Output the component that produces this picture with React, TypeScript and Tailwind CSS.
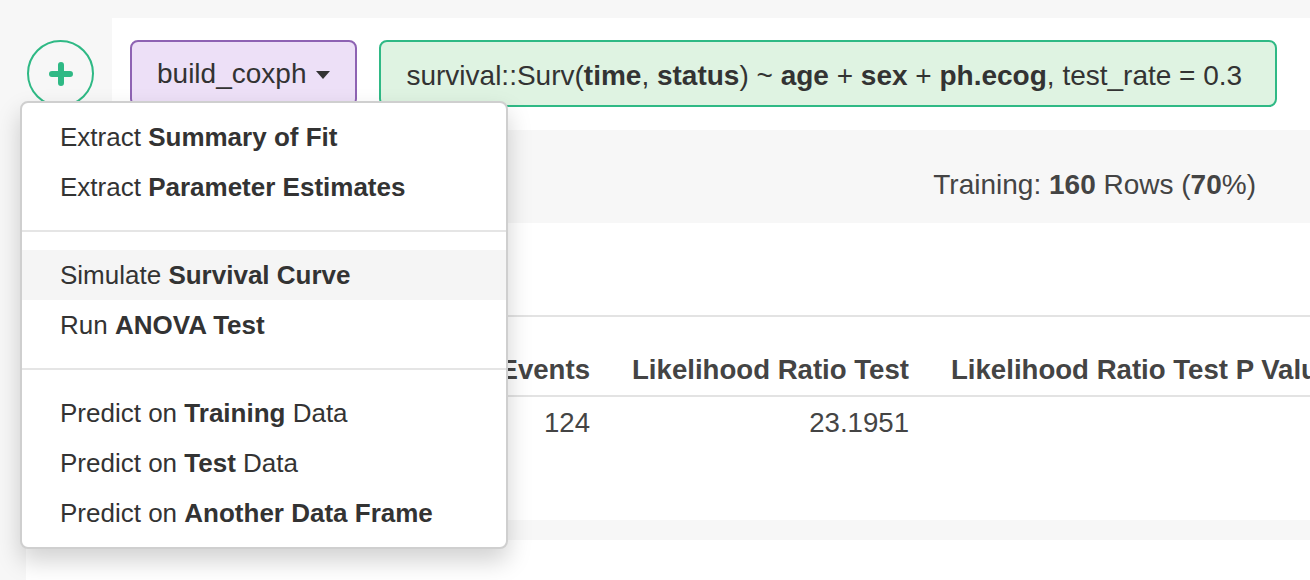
import React from "react";

const font = { fontFamily: '"Liberation Sans", Arial, sans-serif' };

function MenuItem({ pre, bold, post, active }: { pre: string; bold: string; post?: string; active?: boolean }) {
  return (
    <div className={`h-[50px] flex items-center pl-[38px] text-[26px] text-[#333] ${active ? "bg-[#f5f5f5]" : ""}`}>
      <span>
        {pre} <b className="font-bold">{bold}</b>
        {post ? ` ${post}` : ""}
      </span>
    </div>
  );
}

function Sep() {
  return <div className="h-[2px] my-[18px] bg-[#e5e5e5]" />;
}

export default function App() {
  return (
    <div className="relative w-[1310px] h-[580px] overflow-hidden bg-[#f7f7f7]" style={font}>
      {/* header row */}
      <div className="flex pt-[18px] h-[130px]">
        <div className="w-[112px] shrink-0 pl-[27px] pt-[22px]">
          <div className="w-[67px] h-[67px] rounded-full border-2 border-[#2fb985] flex items-center justify-center">
            <svg width="24" height="24" viewBox="0 0 24 24">
              <path d="M12 3v18M3 12h18" stroke="#2fb985" strokeWidth="6" strokeLinecap="round" />
            </svg>
          </div>
        </div>
        <div className="flex-1 bg-white flex items-start pt-[22px] pl-[18px] gap-[22px]">
          <div className="h-[67px] px-[25px] flex items-center gap-[10px] rounded-[8px] border-2 border-[#8e63b3] bg-[#ede0f7] text-[28px] text-[#333]">
            <span>build_coxph</span>
            <svg width="14" height="8" viewBox="0 0 14 8" className="mt-[2px]">
              <path d="M0 0h14L7 8z" fill="#333" />
            </svg>
          </div>
          <div className="h-[67px] w-[898px] px-[25px] pt-[4px] flex items-center rounded-[8px] border-2 border-[#2fb985] bg-[#dff3e2] text-[28px] text-[#333] whitespace-nowrap">
            <span>
              survival::Surv(<b>time</b>, <b>status</b>) ~ <b>age</b> + <b>sex</b> + <b>ph.ecog</b>, test_rate = 0.3
            </span>
          </div>
        </div>
      </div>

      {/* summary band */}
      <div className="h-[93px] flex items-center justify-end pr-[54px] pt-[17px] text-[28px] text-[#444]">
        <span>
          Training: <b>160</b> Rows (<b>70</b>%)
        </span>
      </div>

      {/* table panel */}
      <div className="ml-[26px] bg-white h-[297px] pt-[92px]">
        <div className="border-t-2 border-[#e3e3e3]" />
        <div className="grid grid-cols-[456px_129px_319px_400px] text-[27.6px] text-[#444] whitespace-nowrap">
          <div className="h-[78px]" />
          <div className="h-[78px] flex items-end justify-end pb-[5px] pr-[21px] font-bold">Events</div>
          <div className="h-[78px] flex items-end justify-end pb-[5px] pr-[21px] font-bold">Likelihood Ratio Test</div>
          <div className="h-[78px] flex items-end pb-[5px] pl-[21px] font-bold overflow-hidden">Likelihood Ratio Test P Value</div>
        </div>
        <div className="border-t-2 border-[#e3e3e3]" />
        <div className="grid grid-cols-[456px_129px_319px_400px] text-[27.6px] text-[#444] whitespace-nowrap">
          <div className="h-[52px]" />
          <div className="h-[52px] flex items-center justify-end pr-[21px]">124</div>
          <div className="h-[52px] flex items-center justify-end pr-[21px]">23.1951</div>
          <div className="h-[52px]" />
        </div>
      </div>
      <div className="h-[20px]" />
      <div className="ml-[26px] bg-white h-[40px]" />

      {/* dropdown menu */}
      <div className="absolute left-[20px] top-[101px] w-[488px] bg-white rounded-[8px] border-2 border-[#cfcfcf] shadow-[0_12px_24px_rgba(0,0,0,0.18)] py-[9px]">
        <MenuItem pre="Extract" bold="Summary of Fit" />
        <MenuItem pre="Extract" bold="Parameter Estimates" />
        <Sep />
        <MenuItem pre="Simulate" bold="Survival Curve" active />
        <MenuItem pre="Run" bold="ANOVA Test" />
        <Sep />
        <MenuItem pre="Predict on" bold="Training" post="Data" />
        <MenuItem pre="Predict on" bold="Test" post="Data" />
        <MenuItem pre="Predict on" bold="Another Data Frame" />
      </div>
    </div>
  );
}
